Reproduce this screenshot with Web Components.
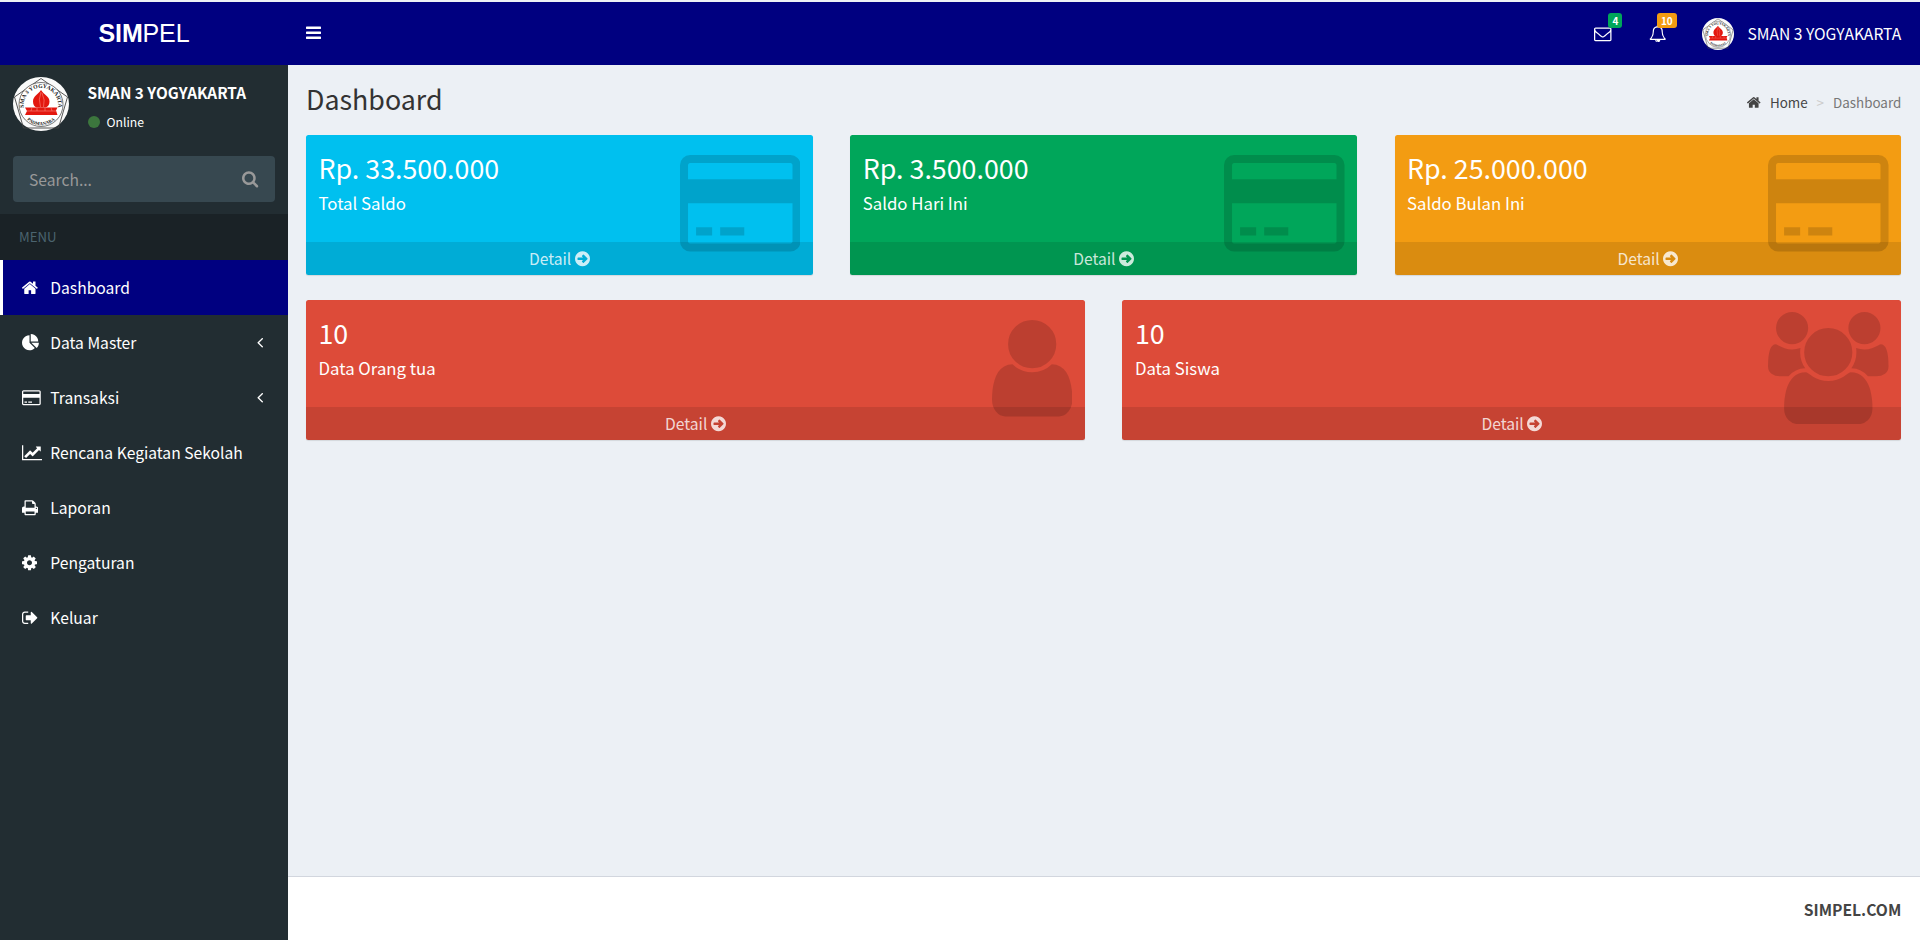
<!DOCTYPE html>
<html lang="id">
<head>
<meta charset="utf-8">
<title>SIMPEL</title>
<style>
html,body{margin:0;height:100%}
body{font-family:"Noto Sans CJK JP","Noto Sans",sans-serif;font-size:15.65px;line-height:25px;color:#333;background:#ecf0f5;overflow:hidden}
</style>
</head>
<body>
<simpel-app></simpel-app>
<script>
const ICONS = {
  bars: ['128 0 1536 1792', 'M1664 1344v128q0 26-19 45t-45 19H192q-26 0-45-19t-19-45v-128q0-26 19-45t45-19h1408q26 0 45 19t19 45zm0-512v128q0 26-19 45t-45 19H192q-26 0-45-19t-19-45V832q0-26 19-45t45-19h1408q26 0 45 19t19 45zm0-512v128q0 26-19 45t-45 19H192q-26 0-45-19t-19-45V320q0-26 19-45t45-19h1408q26 0 45 19t19 45z'],
  home: ['90 0 1664 1792', 'M1472 992v480q0 26-19 45t-45 19h-384v-384H768v384H384q-26 0-45-19t-19-45V992q0-1 .5-3t.5-3l575-474 575 474q1 2 1 6zm223-69l-62 74q-8 9-21 11h-3q-13 0-21-7L896 424l-692 577q-12 8-24 7-13-2-21-11l-62-74q-8-10-7-23.5t11-21.5l719-599q32-26 76-26t76 26l244 204V288q0-14 9-23t23-9h192q14 0 23 9t9 23v408l219 182q10 8 11 21.5t-7 23.5z'],
  search: ['64 0 1664 1792', 'M1216 832q0-185-131.5-316.5T768 384 451.5 515.5 320 832t131.5 316.5T768 1280t316.5-131.5T1216 832zm512 832q0 52-38 90t-90 38q-54 0-90-38l-343-342q-179 124-399 124-143 0-273.5-55.5t-225-150-150-225T64 832t55.5-273.5 150-225 225-150T768 128t273.5 55.5 225 150 150 225T1472 832q0 220-124 399l343 343q37 37 37 90z'],
  card: ['0 0 1920 1792', 'M1760 128q66 0 113 47t47 113v1216q0 66-47 113t-113 47H160q-66 0-113-47T0 1504V288q0-66 47-113t113-47h1600zM160 256q-13 0-22.5 9.5T128 288v224h1664V288q0-13-9.5-22.5T1760 256H160zm1600 1280q13 0 22.5-9.5t9.5-22.5V896H128v608q0 13 9.5 22.5t22.5 9.5h1600zM256 1408v-128h256v128H256zm384 0v-128h384v128H640z'],
  user: ['256 0 1280 1792', 'M1536 1399q0 109-62.5 187t-150.5 78h-854q-88 0-150.5-78t-62.5-187q0-85 8.5-160.5t31.5-152 58.5-131 94-89 134.5-34.5q131 128 313 128t313-128q76 0 134.5 34.5t94 89 58.5 131 31.5 152 8.5 160.5zm-256-887q0 159-112.5 271.5t-271.5 112.5-271.5-112.5-112.5-271.5 112.5-271.5 271.5-112.5 271.5 112.5 112.5 271.5z'],
  users: ['-64 0 1920 1792', 'M529 896q-162 5-265 128h-134q-82 0-138-40.5t-56-118.5q0-353 124-353 6 0 43.5 21t97.5 42.5 119 21.5q67 0 133-23-5 37-5 66 0 139 81 256zm1071 637q0 120-73 189.5t-194 69.5h-874q-121 0-194-69.5t-73-189.5q0-53 3.5-103.5t14-109 26.5-108.5 43-97.5 62-81 85.5-53.5 111.5-20q10 0 43 21.5t73 48 107 48 135 21.5 135-21.5 107-48 73-48 43-21.5q61 0 111.5 20t85.5 53.5 62 81 43 97.5 26.5 108.5 14 109 3.5 103.5zm-1024-1277q0 106-75 181t-181 75-181-75-75-181 75-181 181-75 181 75 75 181zm704 384q0 159-112.5 271.5t-271.5 112.5-271.5-112.5-112.5-271.5 112.5-271.5 271.5-112.5 271.5 112.5 112.5 271.5zm576 225q0 78-56 118.5t-138 40.5h-134q-103-123-265-128 81-117 81-256 0-29-5-66 66 23 133 23 59 0 119-21.5t97.5-42.5 43.5-21q124 0 124 353zm-128-609q0 106-75 181t-181 75-181-75-75-181 75-181 181-75 181 75 75 181z'],
  pie: ['0 0 1792 1792', 'M768 890l546 546q-106 108-247.5 168t-298.5 60q-209 0-385.5-103t-279.5-279.5-103-385.5 103-385.5 279.5-279.5 385.5-103v762zm187 6h773q0 157-60 298.5t-168 247.5zm709-128h-768v-768q209 0 385.5 103t279.5 279.5 103 385.5z'],
  line: ['0 0 2048 1792', 'M2048 1536v128h-2048v-1536h128v1408h1920zm-128-1248v435q0 21-19.5 29.5t-35.5-7.5l-121-121-633 633q-10 10-23 10t-23-10l-233-233-416 416-192-192 585-585q10-10 23-10t23 10l233 233 464-464-121-121q-16-16-7.5-35.5t29.5-19.5h435q14 0 23 9t9 23z'],
  print: ['64 0 1664 1792', 'M448 1536h896v-256h-896v256zm0-640h896v-384h-160q-40 0-68-28t-28-68v-160h-640v640zm1152 64q0-26-19-45t-45-19-45 19-19 45 19 45 45 19 45-19 19-45zm128 0v416q0 13-9.5 22.5t-22.5 9.5h-224v160q0 40-28 68t-68 28h-960q-40 0-68-28t-28-68v-160h-224q-13 0-22.5-9.5t-9.5-22.5v-416q0-79 56.5-135.5t135.5-56.5h64v-544q0-40 28-68t68-28h672q40 0 88 20t76 48l152 152q28 28 48 76t20 88v256h64q79 0 135.5 56.5t56.5 135.5z'],
  cog: ['128 0 1536 1792', 'M1152 896q0-106-75-181t-181-75-181 75-75 181 75 181 181 75 181-75 75-181zm512-109v222q0 12-8 23t-20 13l-185 28q-19 54-39 91 35 50 107 138 10 12 10 25t-9 23q-27 37-99 108t-94 71q-12 0-26-9l-138-108q-44 23-91 38-16 136-29 186-7 28-36 28h-222q-14 0-24.5-8.5t-11.5-21.5l-28-184q-49-16-90-37l-141 107q-10 9-25 9-14 0-25-11-126-114-165-168-7-10-7-23 0-12 8-23 15-21 51-66.5t54-70.5q-27-50-41-99l-183-27q-13-2-21-12.5t-8-23.5v-222q0-12 8-23t19-13l186-28q14-46 39-92-40-57-107-138-10-12-10-24 0-10 9-23 26-36 98.5-107.5t94.5-71.5q13 0 26 10l138 107q44-23 91-38 16-136 29-186 7-28 36-28h222q14 0 24.5 8.5t11.5 21.5l28 184q49 16 90 37l142-107q9-9 24-9 13 0 25 10 129 119 165 170 7 8 7 22 0 12-8 23-15 21-51 66.5t-54 70.5q26 50 41 98l183 28q13 2 21 12.5t8 23.5z'],
  out: ['64 0 1664 1792', 'M704 1440q0 4 1 20t.5 26.5-3 23.5-10 19.5-20.5 6.5h-320q-119 0-203.5-84.5t-84.5-203.5v-704q0-119 84.5-203.5t203.5-84.5h320q13 0 22.5 9.5t9.5 22.5q0 4 1 20t.5 26.5-3 23.5-10 19.5-20.5 6.5h-320q-66 0-113 47t-47 113v704q0 66 47 113t113 47h312l11.5 1 11.5 3 8 5.5 7 9 2 13.5zm928-544q0 26-19 45l-544 544q-19 19-45 19t-45-19-19-45v-288h-448q-26 0-45-19t-19-45v-384q0-26 19-45t45-19h448v-288q0-26 19-45t45-19 45 19l544 544q19 19 19 45z'],
  angle: ['581 64 640 1792', 'M1203 544q0 13-10 23l-393 393 393 393q10 10 10 23t-10 23l-50 50q-10 10-23 10t-23-10l-466-466q-10-10-10-23t10-23l466-466q10-10 23-10t23 10l50 50q10 10 10 23z'],
  mail: ['0 0 1792 1792', 'M1664 1504v-768q-32 36-69 66-268 206-426 338-51 43-83 67t-86.5 48.5-102.5 24.5h-2q-48 0-102.5-24.5t-86.5-48.5-83-67q-158-132-426-338-37-30-69-66v768q0 13 9.5 22.5t22.5 9.5h1472q13 0 22.5-9.5t9.5-22.5zm0-1051v-24.5l-.5-13-3-12.5-5.5-9-9-7.5-14-2.5h-1472q-13 0-22.5 9.5t-9.5 22.5q0 168 147 284 193 152 401 317 6 5 35 29.5t46 37.5 44.5 31.5 50.5 27.5 43 9h2q20 0 43-9t50.5-27.5 44.5-31.5 46-37.5 35-29.5q208-165 401-317 54-43 100.5-115.5t46.5-131.5zm128-37v1088q0 66-47 113t-113 47h-1472q-66 0-113-47t-47-113v-1088q0-66 47-113t113-47h1472q66 0 113 47t47 113z'],
  bell: ['0 0 1792 1792', 'M912 1696q0-16-16-16-59 0-101.5-42.5t-42.5-101.5q0-16-16-16t-16 16q0 73 51.5 124.5t124.5 51.5q16 0 16-16zm-666-288h1300q-266-300-266-832 0-51-24-105t-69-103-121.5-80.5-169.5-31.5-169.5 31.5-121.5 80.5-69 103-24 105q0 532-266 832zm1482 0q0 52-38 90t-90 38h-448q0 106-75 181t-181 75-181-75-75-181h-448q-52 0-90-38t-38-90q50-42 91-88t85-119.5 74.5-158.5 50-206 19.5-260q0-152 117-282.5t307-158.5q-8-19-8-39 0-40 28-68t68-28 68 28 28 68q0 20-8 39 190 28 307 158.5t117 282.5q0 139 19.5 260t50 206 74.5 158.5 85 119.5 91 88z'],
  arrow: ['128 0 1536 1792', 'M1413 896q0-27-18-45l-362-362q-18-18-45-18t-45 18l-91 91q-18 18-18 45t18 45l98 98H448q-26 0-45 19t-19 45v128q0 26 19 45t45 19h502l-98 98q-19 19-19 45t19 45l91 91q18 18 45 18t45-18l362-362q18-18 18-45zm251 0q0 209-103 385.5t-279.5 279.5-385.5 103-385.5-103-279.5-279.5-103-385.5 103-385.5 279.5-279.5 385.5-103 385.5 103 279.5 279.5 103 385.5z']
};

class FaIcon extends HTMLElement {
  connectedCallback() {
    const name = this.getAttribute('name');
    const [box, d] = ICONS[name];
    this.attachShadow({mode: 'open'}).innerHTML = `
      <style>:host{display:inline-block;height:var(--icon-size,17.5px);flex:none}svg{display:block;height:100%;width:auto;fill:currentColor}</style>
      <svg viewBox="${box}"><path fill-rule="${name === 'arrow' ? 'evenodd' : 'nonzero'}" d="${d}"/></svg>`;
  }
}
customElements.define('fa-icon', FaIcon);

const define = (name, html) => customElements.define(name, class extends HTMLElement {
  constructor() {
    super();
    const t = document.createElement('template');
    t.innerHTML = html;
    this.attachShadow({mode: 'open'}).append(t.content.cloneNode(true));
  }
});

define('school-emblem', `
<style>:host{display:block;width:56px;height:54px;flex:none}svg{display:block;width:100%;height:100%}text{font-family:"Liberation Serif",serif;font-weight:bold;fill:#222;text-anchor:middle}</style>
<svg viewBox="0 0 112 108" preserveAspectRatio="none">
  <ellipse cx="56" cy="54" rx="56" ry="54" fill="#fafafa"/>
  <path d="M56 3L109 40L91 102H21L3 40Z" fill="none" stroke="#444" stroke-width="1.8" stroke-linejoin="round"/>
  <circle cx="56" cy="55" r="44" fill="#fff" stroke="#555" stroke-width="1.6"/>
  <path id="top" d="M22 62A34.5 34.5 0 1 1 90 62" fill="none"/>
  <path id="bottom" d="M16 66A41.5 41.5 0 0 0 96 66" fill="none"/>
  <text font-size="11.5"><textPath href="#top" startOffset="50%">SMA 3 YOGYAKARTA</textPath></text>
  <text font-size="9.5"><textPath href="#bottom" startOffset="50%">PADMANABA</textPath></text>
  <path d="M56 26C51 34 40 38 40 49C40 55 43 60 47 61H65C70 60 73 55 73 49C73 38 61 35 56 26Z" fill="#e3170f"/>
  <path d="M24 61H89L86 67L89 76H24L28 68Z" fill="#e3170f"/>
  <path d="M56 30Q50 44 55 60M58 32Q65 46 61 60M28 68H86M38 61L36 68M48 61V68M64 61V68M76 61L78 68" fill="none" stroke="#ff9e92" stroke-width="1"/>
</svg>`);

define('top-bar', `
<style>
:host{display:flex;height:63px;margin-top:2px;background:#000080;color:#fff}
.logo{width:288px;text-align:center;font:400 25px/62.5px "Liberation Sans",Arial,sans-serif;height:63px}
.logo b{font-weight:700}
.logo span{display:inline-block;letter-spacing:-.15px}
nav{flex:1;display:flex;align-items:center;padding:0 18.75px 0 18px}
.menu{margin-top:-1px}
.right{margin-left:auto;display:flex;align-items:center}
.note{position:relative;height:18px;margin-right:37px;line-height:0}
.note.b{margin-right:36px}
.badge{position:absolute;left:14px;top:-12px;height:15px;padding:0 4px;border-radius:3px;background:#00a65a;font:bold 10px/15px "Noto Sans CJK JP",sans-serif}
.b .badge{left:8px;background:#f39c12}
school-emblem{width:32px;height:32px;margin-right:13px}
.name{line-height:25px;white-space:nowrap}
</style>
<div class="logo"><span><b>SIM</b>PEL</span></div>
<nav><fa-icon class="menu" name="bars"></fa-icon>
<div class="right">
<div class="note"><fa-icon name="mail"></fa-icon><span class="badge">4</span></div>
<div class="note b"><fa-icon name="bell"></fa-icon><span class="badge">10</span></div>
<school-emblem></school-emblem><span class="name">SMAN 3 YOGYAKARTA</span>
</div></nav>`);

define('menu-item', `
<style>
:host{display:flex;align-items:center;box-sizing:border-box;height:55px;padding:0 25px 0 18.75px;border-left:3px solid transparent;color:#fff}
:host([active]){background:#000080;border-left-color:#fff}
.ico{width:28.5px;display:flex}
.arrow{display:none;margin-left:auto}
:host([tree]) .arrow{display:block;height:17.5px}
</style>
<span class="ico"><slot name="icon"></slot></span><slot></slot><fa-icon class="arrow" name="angle"></fa-icon>`);

define('side-bar', `
<style>
:host{display:block;width:288px;flex:none;background:#222d32;color:#fff}
.user{display:flex;padding:12px 13px 0;height:79px}
.info{padding-left:18.5px}
.info b{display:block;font-size:15.3px;font-weight:600;line-height:25px;margin-top:3px;white-space:nowrap}
.status{display:flex;align-items:center;font-size:12.2px;line-height:20px;margin-top:7px}
.status i{width:12.5px;height:12.5px;border-radius:50%;background:#3c763d;margin-right:6.5px}
.search{display:flex;align-items:center;justify-content:space-between;box-sizing:border-box;height:46px;margin:0 13px 12px;padding:0 16.5px 0 16px;background:#374850;border-radius:4px;color:#999}
.head{height:46px;box-sizing:border-box;padding:12px 19px;font-size:13.2px;line-height:21px;background:#1a2226;color:#4b646f}
</style>
<div class="user"><school-emblem></school-emblem><div class="info"><b>SMAN 3 YOGYAKARTA</b><div class="status"><i></i>Online</div></div></div>
<div class="search"><span>Search...</span><fa-icon name="search"></fa-icon></div>
<div class="head">MENU</div>
<menu-item active><fa-icon slot="icon" name="home"></fa-icon>Dashboard</menu-item>
<menu-item tree><fa-icon slot="icon" name="pie"></fa-icon>Data Master</menu-item>
<menu-item tree><fa-icon slot="icon" name="card"></fa-icon>Transaksi</menu-item>
<menu-item><fa-icon slot="icon" name="line"></fa-icon>Rencana Kegiatan Sekolah</menu-item>
<menu-item><fa-icon slot="icon" name="print"></fa-icon>Laporan</menu-item>
<menu-item><fa-icon slot="icon" name="cog"></fa-icon>Pengaturan</menu-item>
<menu-item><fa-icon slot="icon" name="out"></fa-icon>Keluar</menu-item>`);

define('small-box', `
<style>
:host{display:flex;flex-direction:column;position:relative;flex:1;height:139.5px;background:var(--c);color:#fff;border-radius:2.5px;box-shadow:0 1px 1px rgba(0,0,0,.1);overflow:hidden}
.inner{flex:1;padding:15px 12.5px 0}
.value{font-size:26.8px;line-height:36px;display:block}
.label{font-size:16.8px;line-height:27px;display:block;margin-top:4px}
.pic{position:absolute;right:12.5px;top:11.5px;--icon-size:112.5px;color:rgba(0,0,0,.15)}
.more{position:relative;height:32.5px;display:flex;align-items:center;justify-content:center;gap:3.5px;background:rgba(0,0,0,.1);color:rgba(255,255,255,.8)}
</style>
<div class="inner"><slot name="value" class="value"></slot><slot class="label"></slot></div>
<div class="pic"><slot name="icon"></slot></div>
<div class="more"><span>Detail</span><fa-icon name="arrow"></fa-icon></div>`);

define('page-content', `
<style>
:host{display:flex;flex-direction:column;flex:1;min-width:0}
header{display:flex;justify-content:space-between;height:70px;padding:0 18.75px 0 18px;box-sizing:border-box}
h1{margin:15px 0 0;font-size:26.8px;font-weight:400;line-height:38px}
.crumbs{display:flex;align-items:center;height:22px;margin-top:26px;font-size:13.4px;color:#777;--icon-size:15px}
.crumbs .h{color:#444;margin-left:9px}
.crumbs .s{color:#ccc;margin:0 9px}
.crumbs fa-icon{color:#444}
.row{display:flex;gap:37.5px;margin:0 18.75px 25.5px 18px}
footer{margin-top:auto;box-sizing:border-box;height:64px;border-top:1px solid #d2d6de;background:#fff;padding:20px 18.75px 18px;text-align:right;font-weight:bold;color:#444}
</style>
<header><h1>Dashboard</h1><div class="crumbs"><fa-icon name="home"></fa-icon><span class="h">Home</span><span class="s">&gt;</span><span>Dashboard</span></div></header>
<div class="row">
<small-box style="--c:#00c0ef"><span slot="value">Rp. 33.500.000</span>Total Saldo<fa-icon slot="icon" name="card"></fa-icon></small-box>
<small-box style="--c:#00a65a"><span slot="value">Rp. 3.500.000</span>Saldo Hari Ini<fa-icon slot="icon" name="card"></fa-icon></small-box>
<small-box style="--c:#f39c12"><span slot="value">Rp. 25.000.000</span>Saldo Bulan Ini<fa-icon slot="icon" name="card"></fa-icon></small-box>
</div>
<div class="row">
<small-box style="--c:#dd4b39"><span slot="value">10</span>Data Orang tua<fa-icon slot="icon" name="user"></fa-icon></small-box>
<small-box style="--c:#dd4b39"><span slot="value">10</span>Data Siswa<fa-icon slot="icon" name="users"></fa-icon></small-box>
</div>
<footer>SIMPEL.COM</footer>`);

define('simpel-app', `
<style>:host{display:flex;flex-direction:column;height:940px}main{flex:1;display:flex;min-height:0}</style>
<top-bar></top-bar><main><side-bar></side-bar><page-content></page-content></main>`);
</script>
</body>
</html>
